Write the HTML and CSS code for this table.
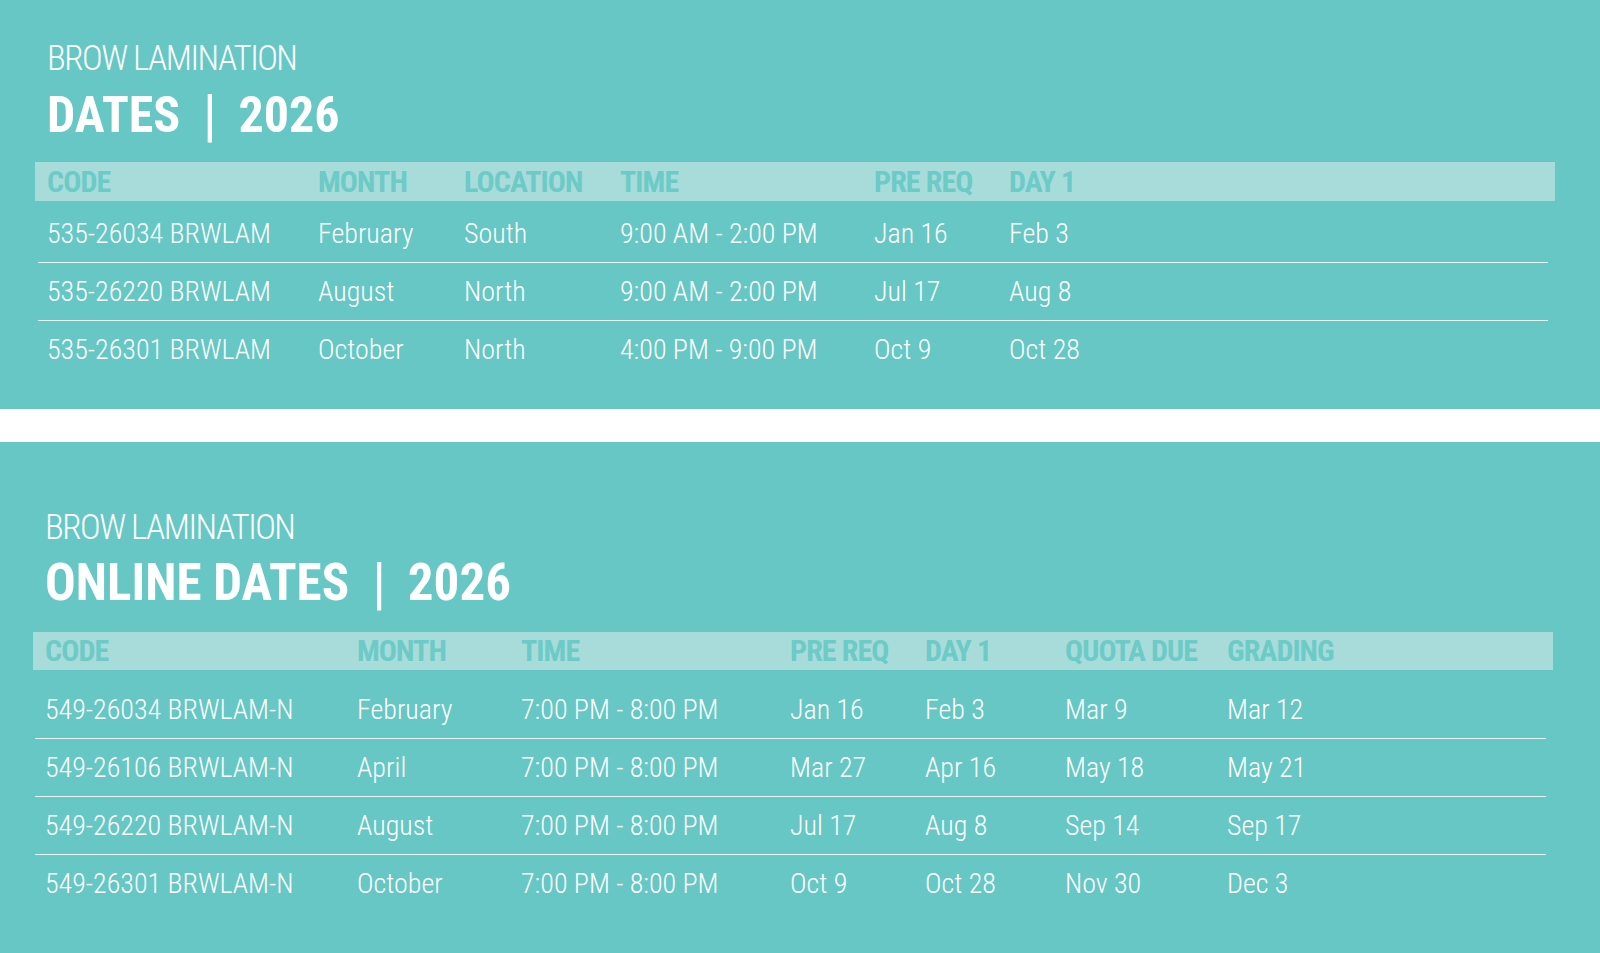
FILE: index.html
```html
<!DOCTYPE html>
<html lang="en">
<head>
<meta charset="utf-8">
<title>Brow Lamination Dates 2026</title>
<link rel="stylesheet" href="styles.css">
</head>
<body>
<section class="panel panel-top">
  <div class="kicker">BROW LAMINATION</div>
  <h1 class="title">DATES <span class="bar">|</span> 2026</h1>
  <div class="table t1">
    <div class="head">
      <span>CODE</span><span>MONTH</span><span>LOCATION</span><span>TIME</span><span>PRE REQ</span><span>DAY 1</span><span></span>
    </div>
    <div class="row">
      <span>535-26034 BRWLAM</span><span>February</span><span>South</span><span>9:00 AM - 2:00 PM</span><span>Jan 16</span><span>Feb 3</span><span></span>
    </div>
    <div class="row">
      <span>535-26220 BRWLAM</span><span>August</span><span>North</span><span>9:00 AM - 2:00 PM</span><span>Jul 17</span><span>Aug 8</span><span></span>
    </div>
    <div class="row">
      <span>535-26301 BRWLAM</span><span>October</span><span>North</span><span>4:00 PM - 9:00 PM</span><span>Oct 9</span><span>Oct 28</span><span></span>
    </div>
  </div>
</section>
<div class="gap"></div>
<section class="panel panel-bottom">
  <div class="kicker">BROW LAMINATION</div>
  <h1 class="title">ONLINE DATES <span class="bar">|</span> 2026</h1>
  <div class="table t2">
    <div class="head">
      <span>CODE</span><span>MONTH</span><span>TIME</span><span>PRE REQ</span><span>DAY 1</span><span>QUOTA DUE</span><span>GRADING</span><span></span>
    </div>
    <div class="row">
      <span>549-26034 BRWLAM-N</span><span>February</span><span>7:00 PM - 8:00 PM</span><span>Jan 16</span><span>Feb 3</span><span>Mar 9</span><span>Mar 12</span><span></span>
    </div>
    <div class="row">
      <span>549-26106 BRWLAM-N</span><span>April</span><span>7:00 PM - 8:00 PM</span><span>Mar 27</span><span>Apr 16</span><span>May 18</span><span>May 21</span><span></span>
    </div>
    <div class="row">
      <span>549-26220 BRWLAM-N</span><span>August</span><span>7:00 PM - 8:00 PM</span><span>Jul 17</span><span>Aug 8</span><span>Sep 14</span><span>Sep 17</span><span></span>
    </div>
    <div class="row">
      <span>549-26301 BRWLAM-N</span><span>October</span><span>7:00 PM - 8:00 PM</span><span>Oct 9</span><span>Oct 28</span><span>Nov 30</span><span>Dec 3</span><span></span>
    </div>
  </div>
</section>
</body>
</html>
```
FILE: styles.css
```css
html, body {
  margin: 0;
  padding: 0;
  background: #ffffff;
}
body {
  font-family: "Roboto Condensed", Roboto, "Liberation Sans", sans-serif;
  color: #ffffff;
  width: 1600px;
  height: 953px;
  overflow: hidden;
}
.panel {
  background: #66c7c5;
  box-sizing: border-box;
}
.panel-top {
  height: 409px;
  padding: 39px 45px 0 35px;
}
.gap {
  height: 33px;
  background: #ffffff;
}
.panel-bottom {
  height: 511px;
  padding: 66px 47px 0 33px;
}
.kicker {
  font-size: 35px;
  font-weight: 300;
  line-height: 40px;
  padding-left: 12px;
  letter-spacing: -1.5px;
}
.title {
  margin: 8px 0 0;
  font-size: 50px;
  font-weight: 700;
  line-height: 56px;
  height: 56px;
  padding-left: 12px;
  white-space: nowrap;
}
.panel-bottom .title {
  font-size: 51px;
  margin-top: 7px;
}
.bar {
  display: inline-block;
  font-size: 58px;
  font-weight: 400;
  line-height: 40px;
  padding: 0 10px 0 11px;
  transform: translateY(3px);
}
.table {
  margin-top: 19px;
}
.panel-bottom .table {
  margin-top: 21px;
}
.head, .row {
  display: grid;
  align-items: baseline;
}
.t1 .head, .t1 .row {
  grid-template-columns: 271px 146px 156px 254px 135px 1fr;
}
.t2 .head, .t2 .row {
  grid-template-columns: 312px 164px 269px 135px 140px 162px 1fr;
}
.head {
  background: #a8dcdb;
  height: 39px;
  line-height: 39px;
  padding-left: 12px;
  font-size: 30px;
  font-weight: 700;
  color: #6ccac7;
  letter-spacing: -0.9px;
}
.t2 .head {
  height: 38px;
  line-height: 38px;
}
.row {
  margin: 0 7px 0 3px;
  padding-left: 9px;
  height: 57px;
  line-height: 57px;
  font-size: 28px;
  font-weight: 300;
  border-bottom: 1px solid #e4f6f5;
}
.row:last-child {
  border-bottom: none;
}
.t1 .head + .row {
  margin-top: 4px;
}
.t2 .head + .row {
  margin-top: 11px;
}
.t2 .row {
  margin-left: 2px;
  padding-left: 10px;
}
```
